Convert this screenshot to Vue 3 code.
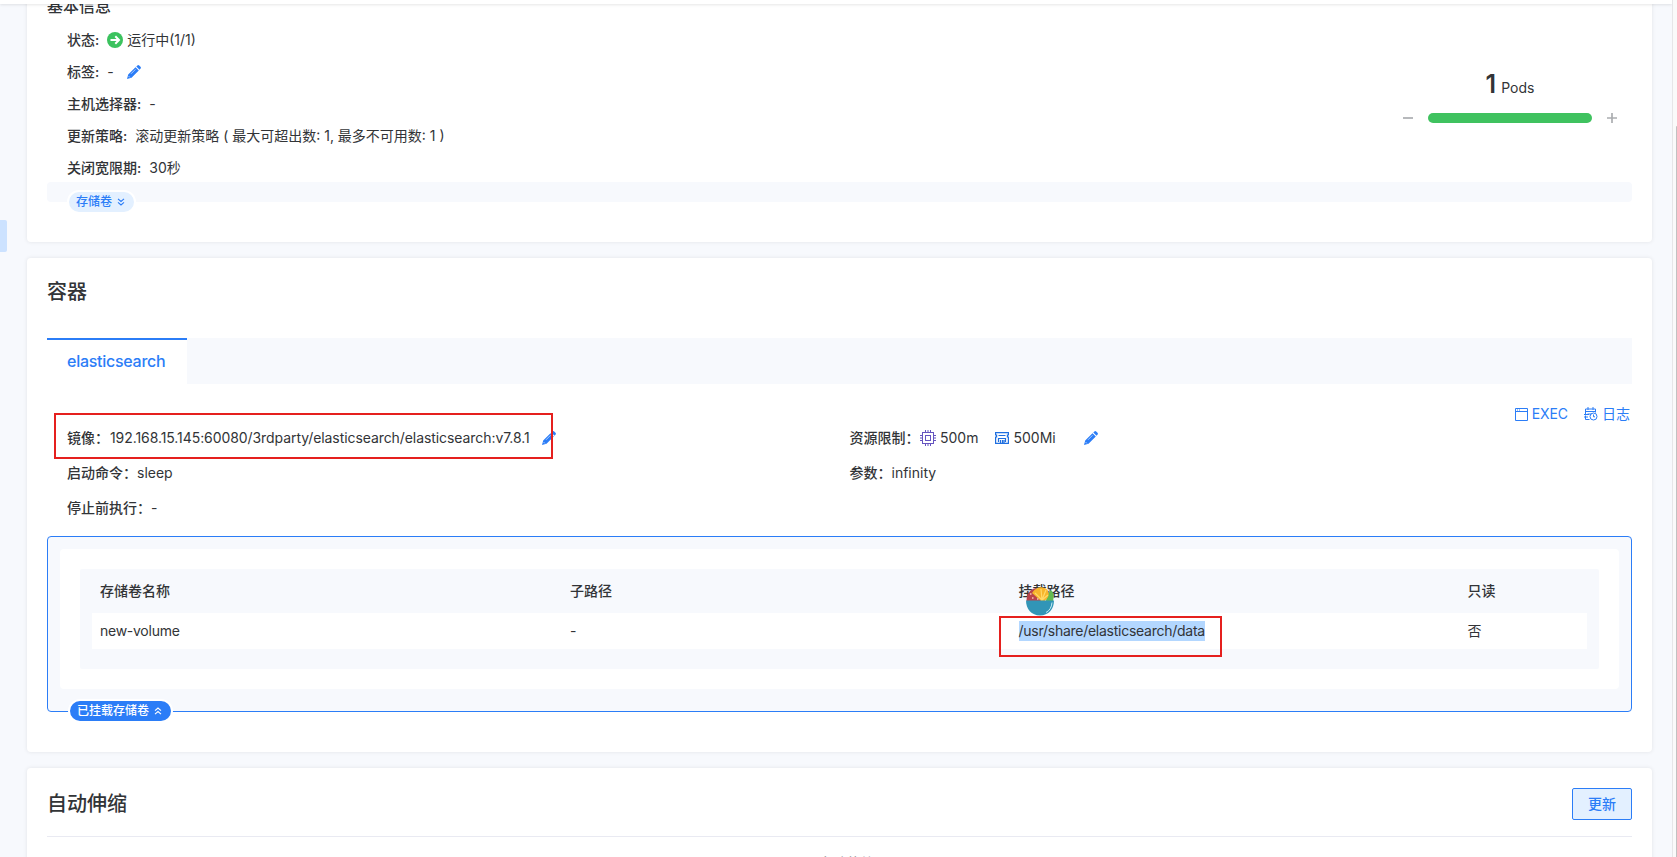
<script setup>
const info = [
  { label: '状态:', value: '运行中(1/1)', kind: 'status' },
  { label: '标签:', value: '-', kind: 'edit' },
  { label: '主机选择器:', value: '-' },
  { label: '更新策略:', value: '滚动更新策略 ( 最大可超出数: 1, 最多不可用数: 1 )' },
  { label: '关闭宽限期:', value: '30秒' },
]
const columns = ['存储卷名称', '子路径', '挂载路径', '只读']
const pencil = 'M9.300 1.400 10.400.4q.9-.7 1.800.1l1.300 1.300q.8.9.1 1.700l-1.100 1.200zM8.500 2.200l3.300 3.300-7.300 7.300L0 14 1.200 9.500z'
</script>

<template>
  <div class="page">
    <div class="topbar"></div>
    <div class="marker"></div>
    <div class="track"><div class="thumb"></div></div>

    <section class="card basic">
      <h3 class="small-title">基本信息</h3>
      <div class="basic-body">
        <div class="rows">
          <div v-for="r in info" :key="r.label" class="row">
            <span class="label">{{ r.label }}</span>
            <svg v-if="r.kind === 'status'" class="status" width="16" height="16" viewBox="0 0 16 16">
              <circle cx="8" cy="8" r="8" fill="#3bc25e" />
              <path d="M3.500 8h8M8.300 4.300 12 8l-3.700 3.700" fill="none" stroke="#fff" stroke-width="2" />
            </svg>
            <span class="value">{{ r.value }}</span>
            <svg v-if="r.kind === 'edit'" class="pencil tag-pencil" width="14" height="14" viewBox="0 0 14 14">
              <path :d="pencil" /><path class="shine" d="m4 8.800 4.500-4.500M1.500 11l1.500 1.500" />
            </svg>
          </div>
        </div>
        <div class="pods">
          <div class="count"><b>1</b><span>Pods</span></div>
          <div class="scale">
            <svg width="10" height="10" viewBox="0 0 10 10"><path d="M0 5h10" /></svg>
            <div class="bar"></div>
            <svg width="10" height="10" viewBox="0 0 10 10"><path d="M0 5h10M5 0v10" /></svg>
          </div>
        </div>
      </div>
      <div class="strip">
        <div class="pill light">
          <span>存储卷</span>
          <svg width="8" height="8" viewBox="0 0 8 8"><path d="m1 .8 3 2.700 3-2.700M1 4.300 4 7l3-2.700" /></svg>
        </div>
      </div>
    </section>

    <section class="card containers">
      <h2>容器</h2>
      <div class="tabs"><div class="tab">elasticsearch</div></div>
      <div class="detail">
        <div class="col left">
          <div class="line"><span class="label">镜像：</span><span class="image">192.168.15.145:60080/3rdparty/elasticsearch/elasticsearch:v7.8.1</span>
            <svg class="pencil img-pencil" width="14" height="14" viewBox="0 0 14 14"><path :d="pencil" /><path class="shine" d="m4 8.800 4.500-4.500M1.500 11l1.500 1.500" /></svg>
          </div>
          <div class="line"><span class="label">启动命令：</span><span class="plain">sleep</span></div>
          <div class="line"><span class="label">停止前执行：</span><span class="plain">-</span></div>
          <div class="frame image-frame"></div>
        </div>
        <div class="col">
          <div class="line">
            <span class="label res">资源限制：</span>
            <svg class="chip" width="16" height="16" viewBox="0 0 16 16" fill="none" stroke="#6554c0">
              <rect x="2.500" y="2.500" width="11" height="11" /><rect x="5.500" y="5.500" width="5" height="5" />
              <path d="M5.500 0v2M8 0v2M10.500 0v2M5.500 14v2M8 14v2M10.500 14v2M0 5.500h2M0 8h2M0 10.500h2M14 5.500h2M14 8h2M14 10.500h2" />
            </svg>
            <span class="cpu">500m</span>
            <svg class="mem" width="14" height="12" viewBox="0 0 14 12" fill="none" stroke="#1f6fe0" stroke-width="1.200">
              <path d="M.6.600h12.800v2.400h-1v2h1v6.400H.6V5h1V3h-1z" /><path d="M3.500 3.500h7M3.500 10V6.500h7V10M5.500 8v3M7.500 8v3M9 8v3" />
            </svg>
            <span class="ram">500Mi</span>
            <svg class="pencil res-pencil" width="14" height="14" viewBox="0 0 14 14"><path :d="pencil" /><path class="shine" d="m4 8.800 4.500-4.500M1.500 11l1.500 1.500" /></svg>
          </div>
          <div class="line"><span class="label">参数：</span><span class="plain">infinity</span></div>
        </div>
        <div class="actions">
          <svg width="13" height="13" viewBox="0 0 13 13"><path d="M.5.500h12v12H.5zM.5 3.500h12M2 2h1M4 2h1" /></svg>
          <span class="exec">EXEC</span>
          <svg class="log-icon" width="14" height="14" viewBox="0 0 14 14"><path d="M5.500 12.500h-4v-4M1.500 7V2h10v3.500M1 4.500h11M4 0v3M9 0v3M0 7.500h5M0 10h4M3.500 7h4" /><circle cx="9.500" cy="9.500" r="3.500" /><path d="M9.500 7.500v2.300H11" /></svg>
          <span>日志</span>
        </div>
      </div>
      <div class="mounts">
        <div class="mount-inner">
          <div class="table">
            <div class="thead"><span v-for="c in columns" :key="c">{{ c }}</span></div>
            <div class="trow"><span>new-volume</span><span>-</span><span><mark>/usr/share/elasticsearch/data</mark></span><span>否</span></div>
            <svg class="bowl" width="28" height="29" viewBox="0 0 28 29">
              <path d="M.5 14C.5 7 4 2 10 1l6 13z" fill="#b8444b" />
              <path d="M20 14c0-4 2-8 5-11 3 3 3 7 2 11z" fill="#62bb52" />
              <path d="M6 6C9 1 13-.5 17 .4c5 1 7 5 5 9.600l-3 4h-4z" fill="#f7b52c" />
              <path d="m9 6 7 7 4-10M15 2l1 11 6-5" fill="none" stroke="#ffd968" stroke-width="1.200" />
              <path d="M4 7h1.500M6 11h1.500M11 12h1.500" stroke="#f3c6b7" stroke-width="1.500" />
              <path d="M0 13.500h28C28 22 22.500 28.500 14 28.500S0 22 0 13.500z" fill="#3195b7" />
              <path d="M26 15.500c-.4 5-2.500 8-6 10" fill="none" stroke="#c9edf5" stroke-width="1" />
            </svg>
            <div class="frame path-frame"></div>
          </div>
        </div>
        <div class="pill solid">
          <span>已挂载存储卷</span>
          <svg width="8" height="8" viewBox="0 0 8 8"><path d="m1 3.700 3-2.700 3 2.700M1 7.200l3-2.700 3 2.700" /></svg>
        </div>
      </div>
    </section>

    <section class="card scaling">
      <div class="scaling-head"><h2>自动伸缩</h2><button>更新</button></div>
      <div class="empty">无自动伸缩</div>
    </section>
  </div>
</template>

<style>
html, body { overflow: hidden; }
</style>
<style scoped>
* { box-sizing: border-box; }
.page { position: relative; height: 857px; overflow: hidden; background: #f7f9fd; color: #323437; font: 14px/20px Inter, "Noto Sans CJK SC", sans-serif; padding: 0 25px 0 27px; white-space: nowrap; }
.topbar { position: absolute; inset: 0 5px auto 0; height: 4px; background: #fff; box-shadow: 0 1px 3px rgba(0,0,0,.1); z-index: 3; }
.marker { position: absolute; left: 0; top: 220px; width: 7px; height: 32px; background: #cce2ff; border-radius: 0 2px 2px 0; }
.track { position: absolute; right: 0; top: 0; width: 5px; height: 857px; background: #fafafa; border-left: 1px solid #e6e6e8; z-index: 4; }
.thumb { margin: 126px 0 0 3px; height: 731px; background: #c1c1c1; border-top-left-radius: 4px; }
h2, h3 { margin: 0; font-weight: 500; }
.card { background: #fff; border-radius: 4px; box-shadow: 0 0 4px rgba(0,0,0,.09); padding: 0 20px; margin-bottom: 16px; }
.basic { height: 242px; overflow: hidden; }
.small-title { font-size: 16px; line-height: 24px; height: 24px; transform: translateY(-6px); }
.basic-body { display: flex; justify-content: space-between; height: 158px; padding: 0 12px 0 20px; }
.row { display: flex; align-items: center; height: 32px; }
.label { font-weight: 500; }
.row .label { margin-right: 8px; }
.status { margin-right: 4px; }
.pencil { fill: #2b7df7; }
.shine { fill: none; stroke: #fff; stroke-width: .6; }
.tag-pencil { margin-left: 13px; }
.pods { width: 220px; padding-top: 45px; }
.count { display: flex; align-items: baseline; justify-content: center; gap: 5px; height: 30px; line-height: 30px; }
.count b { font-size: 25px; font-weight: 600; }
.scale { display: flex; align-items: center; justify-content: center; gap: 15px; margin-top: 14px; }
.scale svg { stroke: #abadb0; stroke-width: 1.700; }
.bar { width: 164px; height: 10px; border-radius: 5px; background: #3fc25f; }
.strip { position: relative; height: 20px; border-radius: 4px; background: #f7f9fd; }
.pill { position: absolute; display: flex; align-items: center; gap: 5px; height: 24px; border: 2px solid #fff; border-radius: 12px; font-size: 12px; font-weight: 500; padding: 0 8px 0 7px; }
.pill svg { fill: none; stroke: currentColor; stroke-width: 1.100; }
.light { left: 20px; top: 8px; width: 69px; background: #e3f0ff; color: #2b7df7; }
.solid { left: 20px; bottom: -12px; width: 105px; background: #2b7df7; color: #fff; }
.containers { height: 494px; }
.containers h2 { font-size: 20px; line-height: 28px; padding-top: 20px; height: 80px; }
.tabs { height: 46px; background: #f7f9fd; }
.tab { width: 140px; height: 46px; border-top: 2px solid #2b7df7; background: #fff; color: #2b7df7; font-size: 16px; font-weight: 500; line-height: 43px; padding-left: 20px; letter-spacing: -.27px; }
.detail { position: relative; display: grid; grid-template-columns: 782.500px 1fr; padding-left: 20px; height: 152px; }
.col { padding-top: 36px; }
.left { position: relative; }
.line { display: flex; align-items: center; height: 35px; }
.image { letter-spacing: -.075px; margin-left: 1px; padding-top: 1px; }
.plain { padding-top: 1px; }
.img-pencil { margin-left: 12.500px; }
.chip { margin: 0 4px 0 .5px; }
.mem { margin: 0 4px 0 17px; }
.res-pencil { margin-left: 28px; }
.frame { position: absolute; border: 2px solid #e5201e; }
.image-frame { left: -13px; top: 29px; width: 499px; height: 46px; }
.path-frame { left: 919px; top: 47px; width: 223px; height: 41px; }
.actions { position: absolute; right: 2px; top: 20px; display: flex; align-items: center; color: #2b7df7; }
.actions svg { fill: none; stroke: #2b7df7; }
.exec { margin: 0 16px 0 4px; letter-spacing: -.1px; }
.log-icon { margin-right: 4px; }
.mounts { position: relative; height: 176px; border: 1px solid #2b7df7; border-radius: 4px; background: #f7f9fd; padding: 12px; }
.mount-inner { background: #fff; height: 140px; border-radius: 4px; padding: 20px; }
.table { position: relative; height: 100px; padding: 0 12px; background: #f7f9fd; border-radius: 2px; }
.thead, .trow { display: grid; grid-template-columns: 470px 448.500px 449px 1fr; align-items: center; padding-left: 8px; }
.thead { height: 44px; font-weight: 500; }
.trow { height: 36px; background: #fff; letter-spacing: -.26px; }
mark { display: inline-block; height: 20px; background: #b3d7ff; color: inherit; vertical-align: top; }
.bowl { position: absolute; left: 946px; top: 18px; }
.scaling { height: 120px; }
.scaling-head { display: flex; justify-content: space-between; align-items: center; height: 69px; padding-top: 3px; border-bottom: 1px solid #e9eaf2; }
.scaling h2 { font-size: 20px; }
button { width: 60px; height: 32px; border: 1px solid #2b7df7; border-radius: 2px; background: #e3f0ff; color: #2b7df7; font: inherit; font-weight: 500; padding: 0; }
.empty { text-align: center; padding-top: 16px; color: #96999e; }
</style>
